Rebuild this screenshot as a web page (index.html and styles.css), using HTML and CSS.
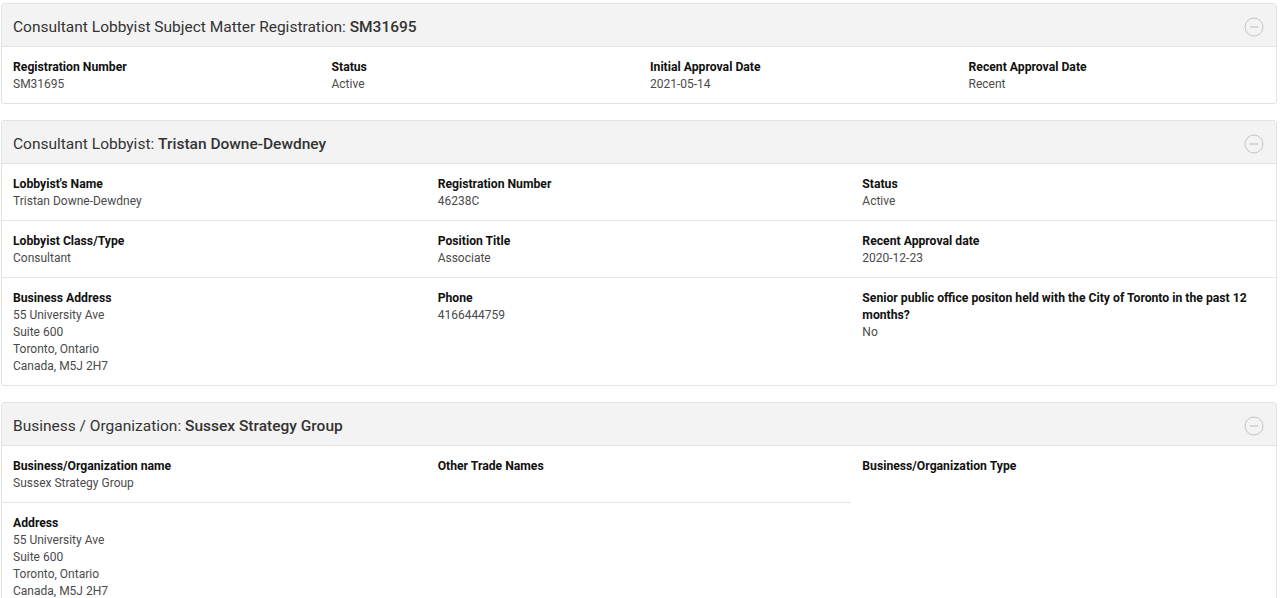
FILE: index.html
```html
<!DOCTYPE html>
<html lang="en">
<head>
    <meta charset="UTF-8">
    <meta name="viewport" content="width=device-width, initial-scale=1.0">
    <title>Registration SM31695</title>
    <link rel="stylesheet" href="styles.css">
</head>
<body>
    <div class="page">

        <!-- Регистрация -->
        <div class="card">
            <div class="card-header">
                <h2>Consultant Lobbyist Subject Matter Registration: <strong>SM31695</strong></h2>
                <svg class="toggle" width="20" height="20" viewBox="0 0 20 20"><circle cx="10" cy="10" r="9" /><line x1="6" y1="10" x2="14" y2="10" /></svg>
            </div>
            <div class="row cols-4">
                <div class="field"><div class="label">Registration Number</div><div class="value">SM31695</div></div>
                <div class="field"><div class="label">Status</div><div class="value">Active</div></div>
                <div class="field"><div class="label">Initial Approval Date</div><div class="value">2021-05-14</div></div>
                <div class="field"><div class="label">Recent Approval Date</div><div class="value">Recent</div></div>
            </div>
        </div>

        <!-- Лоббист -->
        <div class="card">
            <div class="card-header">
                <h2>Consultant Lobbyist: <strong>Tristan Downe-Dewdney</strong></h2>
                <svg class="toggle" width="20" height="20" viewBox="0 0 20 20"><circle cx="10" cy="10" r="9" /><line x1="6" y1="10" x2="14" y2="10" /></svg>
            </div>
            <div class="row cols-3">
                <div class="field"><div class="label">Lobbyist's Name</div><div class="value">Tristan Downe-Dewdney</div></div>
                <div class="field"><div class="label">Registration Number</div><div class="value">46238C</div></div>
                <div class="field"><div class="label">Status</div><div class="value">Active</div></div>
            </div>
            <div class="row cols-3">
                <div class="field"><div class="label">Lobbyist Class/Type</div><div class="value">Consultant</div></div>
                <div class="field"><div class="label">Position Title</div><div class="value">Associate</div></div>
                <div class="field"><div class="label">Recent Approval date</div><div class="value">2020-12-23</div></div>
            </div>
            <div class="row cols-3">
                <div class="field">
                    <div class="label">Business Address</div>
                    <div class="value">55 University Ave<br>Suite 600<br>Toronto, Ontario<br>Canada, M5J 2H7</div>
                </div>
                <div class="field"><div class="label">Phone</div><div class="value">4166444759</div></div>
                <div class="field"><div class="label">Senior public office positon held with the City of Toronto in the past 12 months?</div><div class="value">No</div></div>
            </div>
        </div>

        <!-- Организация -->
        <div class="card">
            <div class="card-header">
                <h2>Business / Organization: <strong>Sussex Strategy Group</strong></h2>
                <svg class="toggle" width="20" height="20" viewBox="0 0 20 20"><circle cx="10" cy="10" r="9" /><line x1="6" y1="10" x2="14" y2="10" /></svg>
            </div>
            <div class="org-grid">
                <div class="field lined"><div class="label">Business/Organization name</div><div class="value">Sussex Strategy Group</div></div>
                <div class="field lined"><div class="label">Other Trade Names</div><div class="value"></div></div>
                <div class="field side"><div class="label">Business/Organization Type</div><div class="value"></div></div>
                <div class="field">
                    <div class="label">Address</div>
                    <div class="value">55 University Ave<br>Suite 600<br>Toronto, Ontario<br>Canada, M5J 2H7</div>
                </div>
            </div>
        </div>

    </div>
</body>
</html>
```

FILE: styles.css
```css
body {
    margin: 0;
    padding: 0;
    font-family: Roboto, "Liberation Sans", Arial, sans-serif;
    background-color: #fff;
    color: #333;
}

.page {
    display: flex;
    flex-direction: column;
    gap: 16px;
    padding: 3px 3px 0 1px;
}

.card {
    border: 1px solid #e2e2e2;
    border-radius: 3px;
    background-color: #fff;
}

.card-header {
    display: flex;
    align-items: center;
    justify-content: space-between;
    padding: 14px 12px 10px 11px;
    background-color: #f3f3f3;
    border-bottom: 1px solid #e2e2e2;
}

.card-header h2 {
    margin: 0;
    font-size: 15.5px;
    line-height: 18px;
    font-weight: 400;
    color: #333;
}

.card-header h2 strong {
    font-weight: 500;
}

.toggle {
    margin: -1px 0;
}

.toggle circle {
    fill: none;
    stroke: #c4c4c4;
    stroke-width: 1;
}

.toggle line {
    stroke: #c4c4c4;
    stroke-width: 1.2;
}

.row {
    display: grid;
    border-bottom: 1px solid #e6e6e6;
}

.row:last-child {
    border-bottom: none;
}

.cols-4 {
    grid-template-columns: repeat(4, 1fr);
}

.cols-3 {
    grid-template-columns: repeat(3, 1fr);
}

.field {
    padding: 12px 14px 10px 11px;
    font-size: 12px;
    line-height: 17px;
}

.label {
    font-size: 12.2px;
    font-weight: 700;
    color: #111;
}

.value {
    color: #4a4a4a;
    min-height: 17px;
}

.org-grid {
    display: grid;
    grid-template-columns: repeat(3, 1fr);
}

.org-grid .lined {
    border-bottom: 1px solid #e6e6e6;
}

.org-grid .side {
    grid-column: 3;
    grid-row: 1 / span 2;
}
```
